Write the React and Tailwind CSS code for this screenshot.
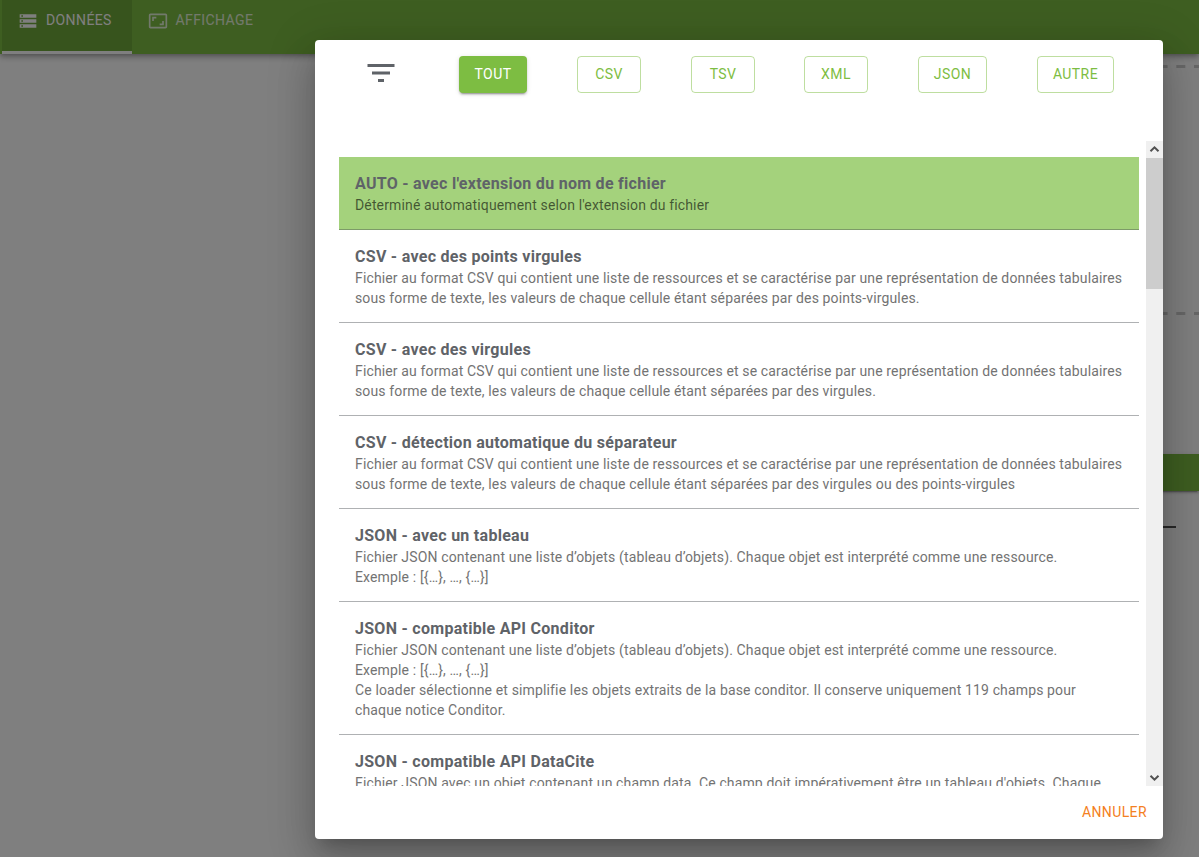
import React from "react";

const CSV_TEXT =
  "Fichier au format CSV qui contient une liste de ressources et se caractérise par une représentation de données tabulaires\nsous forme de texte, les valeurs de chaque cellule étant séparées par des ";
const JSON_TEXT =
  "Fichier JSON contenant une liste d’objets (tableau d’objets). Chaque objet est interprété comme une ressource.\nExemple : [{…}, …, {…}]";

const LOADERS = [
  {
    title: "AUTO - avec l'extension du nom de fichier",
    text: "Déterminé automatiquement selon l'extension du fichier",
    selected: true,
  },
  { title: "CSV - avec des points virgules", text: CSV_TEXT + "points-virgules." },
  { title: "CSV - avec des virgules", text: CSV_TEXT + "virgules." },
  {
    title: "CSV - détection automatique du séparateur",
    text: CSV_TEXT + "virgules ou des points-virgules",
  },
  { title: "JSON - avec un tableau", text: JSON_TEXT },
  {
    title: "JSON - compatible API Conditor",
    text:
      JSON_TEXT +
      "\nCe loader sélectionne et simplifie les objets extraits de la base conditor. Il conserve uniquement 119 champs pour\nchaque notice Conditor.",
  },
  {
    title: "JSON - compatible API DataCite",
    text: "Fichier JSON avec un objet contenant un champ data. Ce champ doit impérativement être un tableau d'objets. Chaque",
  },
];

const FILTERS = [
  { label: "TOUT", width: "w-[68px]", active: true },
  { label: "CSV", width: "w-16" },
  { label: "TSV", width: "w-16" },
  { label: "XML", width: "w-16 -ml-px" },
  { label: "JSON", width: "w-[69px]" },
  { label: "AUTRE", width: "w-[77px]" },
];

function Icon({ d, className }) {
  return (
    <svg viewBox="0 0 24 24" fill="currentColor" className={className}>
      <path d={d} />
    </svg>
  );
}

function AppHeader() {
  return (
    <header className="relative flex h-[54px] bg-[#7dbd42] pl-0.5 text-sm tracking-[0.02857em] text-white shadow-[0_2px_4px_-1px_rgba(0,0,0,0.2),0_4px_5px_0_rgba(0,0,0,0.14),0_1px_10px_0_rgba(0,0,0,0.12)]">
      <div className="flex w-[130px] items-start border-b-[3px] border-white bg-[#6fa83a] pt-2 pl-4">
        <Icon
          className="mt-[3px] mr-2 size-5"
          d="M2 20h20v-4H2v4zm2-3h2v2H4v-2zM2 4v4h20V4H2zm4 3H4V5h2v2zm-4 7h20v-4H2v4zm2-3h2v2H4v-2z"
        />
        <span className="leading-[24.5px]">DONNÉES</span>
      </div>
      <div className="flex items-start pt-2 pl-4 text-white/80">
        <Icon
          className="mt-[3px] mr-[7.500px] size-5"
          d="M19 12h-2v3h-3v2h5v-5zM7 9h3V7H5v5h2V9zm14-6H3c-1.100 0-2 .9-2 2v14c0 1.100.9 2 2 2h18c1.100 0 2-.9 2-2V5c0-1.100-.9-2-2-2zm0 16.010H3V4.990h18v14.020z"
        />
        <span className="leading-[24.5px]">AFFICHAGE</span>
      </div>
    </header>
  );
}

function Dashes() {
  return (
    <svg className="block h-[3px] w-full" viewBox="0 0 1199 3">
      <path
        d="M400 1.500H1199"
        stroke="#cfcfcf"
        strokeWidth="3"
        strokeDasharray="9 8.700"
        strokeDashoffset="2.500"
      />
    </svg>
  );
}

function ImportPage() {
  return (
    <main className="flex flex-col pt-[11px]">
      <Dashes />
      <div className="h-[244px]" />
      <Dashes />
      <div className="mt-[139px] ml-[400px] h-[37px] bg-[#7dbd42] shadow-[0_3px_1px_-2px_rgba(0,0,0,0.2),0_2px_2px_0_rgba(0,0,0,0.14),0_1px_5px_0_rgba(0,0,0,0.12)]" />
      <div className="mt-[35px] mr-[23px] ml-[400px] h-0.5 bg-[#505050]" />
    </main>
  );
}

function FilterBar() {
  return (
    <div className="flex h-[101px] shrink-0 items-start pt-4 pl-[48.400px]">
      <Icon
        className="-mt-[0.700px] mr-[59.600px] size-9 text-[#5f6368]"
        d="M10 18h4v-2h-4v2zM3 6v2h18V6H3zm3 7h12v-2H6v2z"
      />
      <div className="flex gap-[50px]">
        {FILTERS.map((f) => (
          <button
            key={f.label}
            className={
              "h-[37px] shrink-0 rounded pb-0.5 text-sm tracking-[0.02857em] " +
              f.width +
              (f.active
                ? " bg-[#7dbd42] text-white shadow-[0_3px_1px_-2px_rgba(0,0,0,0.2),0_2px_2px_0_rgba(0,0,0,0.14),0_1px_5px_0_rgba(0,0,0,0.12)]"
                : " border border-[#7dbd42]/50 text-[#7dbd42]")
            }
          >
            {f.label}
          </button>
        ))}
      </div>
    </div>
  );
}

function LoaderItem({ title, text, selected }) {
  return (
    <li
      className={
        "border-b px-4 pt-[15px] pb-3.5 " +
        (selected ? "border-[#7d9b68] bg-[#a4d27c]" : "border-[#afb1b3]")
      }
    >
      <h3 className="text-base leading-6 font-bold tracking-[0.28px] text-[#5f6368]">{title}</h3>
      <p
        className={
          "-mt-px -mr-2 text-sm leading-5 tracking-[0.141px] whitespace-pre-line " +
          (selected ? "text-black/60" : "text-[#737373]")
        }
      >
        {text}
      </p>
    </li>
  );
}

function Scrollbar() {
  return (
    <div className="flex w-[17px] shrink-0 flex-col bg-[#f0f0f0]">
      <svg viewBox="0 0 17 17" className="size-[17px]" fill="none" stroke="#505050" strokeWidth="2">
        <path d="M4.500 10.300 8.500 6.300 12.500 10.300" />
      </svg>
      <div className="h-[131px] bg-[#cdcdcd]" />
      <div className="flex-1" />
      <svg viewBox="0 0 17 17" className="size-[17px]" fill="none" stroke="#505050" strokeWidth="2">
        <path d="M4.500 6.700 8.500 10.700 12.500 6.700" />
      </svg>
    </div>
  );
}

function LoaderDialog() {
  return (
    <div
      role="dialog"
      className="flex h-[799px] w-[848px] flex-col rounded bg-white shadow-[0_11px_15px_-7px_rgba(0,0,0,0.2),0_24px_38px_3px_rgba(0,0,0,0.14),0_9px_46px_8px_rgba(0,0,0,0.12)]"
    >
      <FilterBar />
      <div className="flex h-[645px] shrink-0">
        <ul className="mr-[7px] ml-6 flex-1 overflow-hidden pt-4">
          {LOADERS.map((l) => (
            <LoaderItem key={l.title} {...l} />
          ))}
        </ul>
        <Scrollbar />
      </div>
      <div className="flex flex-1 items-center justify-end pr-4 pb-0.5">
        <button className="text-sm tracking-[0.02857em] text-[#f48022]">ANNULER</button>
      </div>
    </div>
  );
}

export default function App() {
  return (
    <div className="relative h-[857px] w-[1199px] overflow-hidden bg-white font-[Roboto,sans-serif]">
      <AppHeader />
      <ImportPage />
      <div className="absolute inset-0 flex items-start bg-black/50 pt-10 pl-[315px]">
        <LoaderDialog />
      </div>
    </div>
  );
}
